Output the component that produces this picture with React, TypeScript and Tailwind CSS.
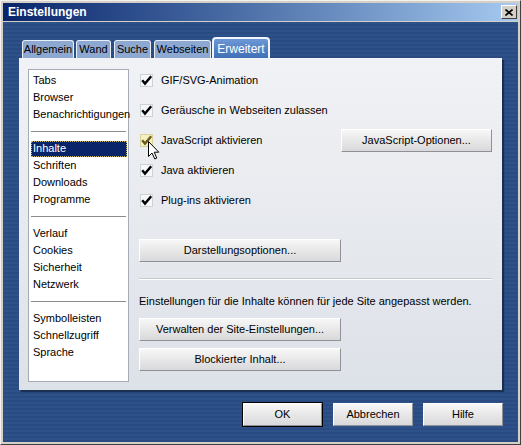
import React from 'react';

const listGroups = [
  ['Tabs', 'Browser', 'Benachrichtigungen'],
  ['Inhalte', 'Schriften', 'Downloads', 'Programme'],
  ['Verlauf', 'Cookies', 'Sicherheit', 'Netzwerk'],
  ['Symbolleisten', 'Schnellzugriff', 'Sprache'],
];

const tabs = [
  { label: 'Allgemein', w: 'w-[52px]', gap: 'mr-[2px]' },
  { label: 'Wand', w: 'w-[35px]', gap: 'mr-[3px]' },
  { label: 'Suche', w: 'w-[37px]', gap: 'mr-[3px]' },
  { label: 'Webseiten', w: 'w-[57px]', gap: 'mr-[1px]' },
];

const checks = [
  'GIF/SVG-Animation',
  'Geräusche in Webseiten zulassen',
  'JavaScript aktivieren',
  'Java aktivieren',
  'Plug-ins aktivieren',
];

const Checkbox = ({ hover }) => (
  <svg width="13" height="13" viewBox="0 0 13 13" className="shrink-0">
    <rect x="0.5" y="0.5" width="12" height="12" fill={hover ? '#f3f1c4' : '#f6f7f9'} stroke={hover ? '#d8d49a' : '#cdd1d8'} />
    <path d="M2.2 6.2 L5 9.6 L11.2 2.2" fill="none" stroke={hover ? '#6b5a18' : '#000'} strokeWidth="2.4" />
  </svg>
);

const WinButton = ({ children, className = '', isDefault = false }) => (
  <button
    className={`h-[23px] flex items-center justify-center text-[11px] text-black bg-gradient-to-b from-[#f7f7f7] to-[#d9d9db] border border-t-[#ffffff] border-l-[#ffffff] border-r-[#8f9196] border-b-[#8f9196] ${isDefault ? 'outline outline-1 outline-black' : ''} ${className}`}
  >
    {children}
  </button>
);

export default function App() {
  return (
    <div className="w-[521px] h-[445px] bg-[#d4d0c8] border-t border-l border-t-[#f4f2ee] border-l-[#f4f2ee] border-r border-b border-r-[#404040] border-b-[#404040] p-[2px] flex flex-col font-['Liberation_Sans',Arial,sans-serif] text-[11px] select-none">
      {/* title bar */}
      <div className="h-[18px] shrink-0 flex items-center justify-between bg-gradient-to-r from-[#0a246a] to-[#a6caf0] pl-[5px] pr-[1px]">
        <span className="text-white font-bold text-[12px] leading-none">Einstellungen</span>
        <div className="w-[16px] h-[14px] bg-[#d4d0c8] border border-t-white border-l-white border-r-[#404040] border-b-[#404040] flex items-center justify-center">
          <svg width="8" height="7" viewBox="0 0 8 7">
            <path d="M0.5 0.5 L7.5 6.5 M7.5 0.5 L0.5 6.5" stroke="#000" strokeWidth="1.6" />
          </svg>
        </div>
      </div>

      {/* body */}
      <div className="mt-[1px] flex-1 flex flex-col px-[16px] pt-[15px] bg-[repeating-linear-gradient(180deg,#2d5189_0px,#2d5189_2px,#294b81_2px,#294b81_4px)]">
        {/* tabs */}
        <div className="h-[21px] flex items-end pl-[3px]">
          {tabs.map((t) => (
            <div
              key={t.label}
              className={`${t.w} ${t.gap} h-[18px] rounded-t-[3px] border border-b-0 border-[#e8eef8] bg-[#8ea9d1] flex items-center justify-center text-black text-[11px] leading-none`}
            >
              {t.label}
            </div>
          ))}
          <div className="w-[58px] h-[21px] rounded-t-[4px] border-2 border-b-0 border-[#f2f6fc] bg-gradient-to-b from-[#6d98d6] to-[#3f6fb6] flex items-center justify-center text-white text-[12px] leading-none">
            Erweitert
          </div>
        </div>

        {/* panel */}
        <div className="w-[483px] h-[332px] shrink-0 flex bg-gradient-to-b from-[#f1f2f5] to-[#dde1e8] shadow-[2px_2px_1px_rgba(0,0,0,0.4)] pl-[9px] pt-[11px] relative">
          {/* category list */}
          <div className="w-[101px] h-[313px] bg-white border border-[#a5acb5] pt-[2px] px-[1px] flex flex-col">
            {listGroups.map((group, gi) => (
              <React.Fragment key={gi}>
                {gi > 0 && (
                  <div className="h-[17px] flex items-center px-[1px]">
                    <div className="w-full h-px bg-[#8c8c8c]" />
                  </div>
                )}
                {group.map((item) =>
                  item === 'Inhalte' ? (
                    <div key={item} className="h-[17px] flex items-center pl-[1px]">
                      <div className="w-full h-[16px] bg-[#0a246a] text-white border border-dotted border-[#c8b860] flex items-center pl-[1px]">
                        {item}
                      </div>
                    </div>
                  ) : (
                    <div key={item} className="h-[17px] flex items-center pl-[3px] text-black">
                      {item}
                    </div>
                  )
                )}
              </React.Fragment>
            ))}
          </div>

          {/* right side */}
          <div className="flex-1 pl-[10px] pr-[10px] flex flex-col">
            <div className="flex flex-col gap-[8px]">
              {checks.map((c, i) => (
                <div key={c} className="h-[22px] flex items-center relative">
                  <div className="ml-[1px] mr-[8px] flex">
                    <Checkbox hover={i === 2} />
                  </div>
                  <span className="text-black">{c}</span>
                  {i === 2 && (
                    <>
                      <WinButton className="ml-auto w-[151px]">JavaScript-Optionen...</WinButton>
                      <svg width="12" height="19" viewBox="0 0 12 19" className="absolute left-[9px] top-[12px]">
                        <path d="M0.5 0.5 L0.5 15.5 L4 12 L6.8 18 L8.8 17.1 L6.2 11.2 L10.8 11.2 Z" fill="#fff" stroke="#000" strokeWidth="1" />
                      </svg>
                    </>
                  )}
                </div>
              ))}
            </div>

            <WinButton className="mt-[28px] w-[202px]">Darstellungsoptionen...</WinButton>

            <div className="mt-[16px] h-[2px] border-t border-t-[#c4c8cf] border-b border-b-[#ffffff]" />

            <div className="mt-[14px] h-[14px] leading-[14px] text-black">
              Einstellungen für die Inhalte können für jede Site angepasst werden.
            </div>

            <WinButton className="mt-[10px] w-[202px]">Verwalten der Site-Einstellungen...</WinButton>
            <WinButton className="mt-[7px] w-[202px]">Blockierter Inhalt...</WinButton>
          </div>
        </div>

        {/* dialog buttons */}
        <div className="mt-[13px] w-[484px] flex justify-end gap-[10px]">
          <WinButton isDefault className="w-[79px] h-[22px] mr-[1px]">OK</WinButton>
          <WinButton className="w-[80px]">Abbrechen</WinButton>
          <WinButton className="w-[80px]">Hilfe</WinButton>
        </div>
      </div>
    </div>
  );
}
